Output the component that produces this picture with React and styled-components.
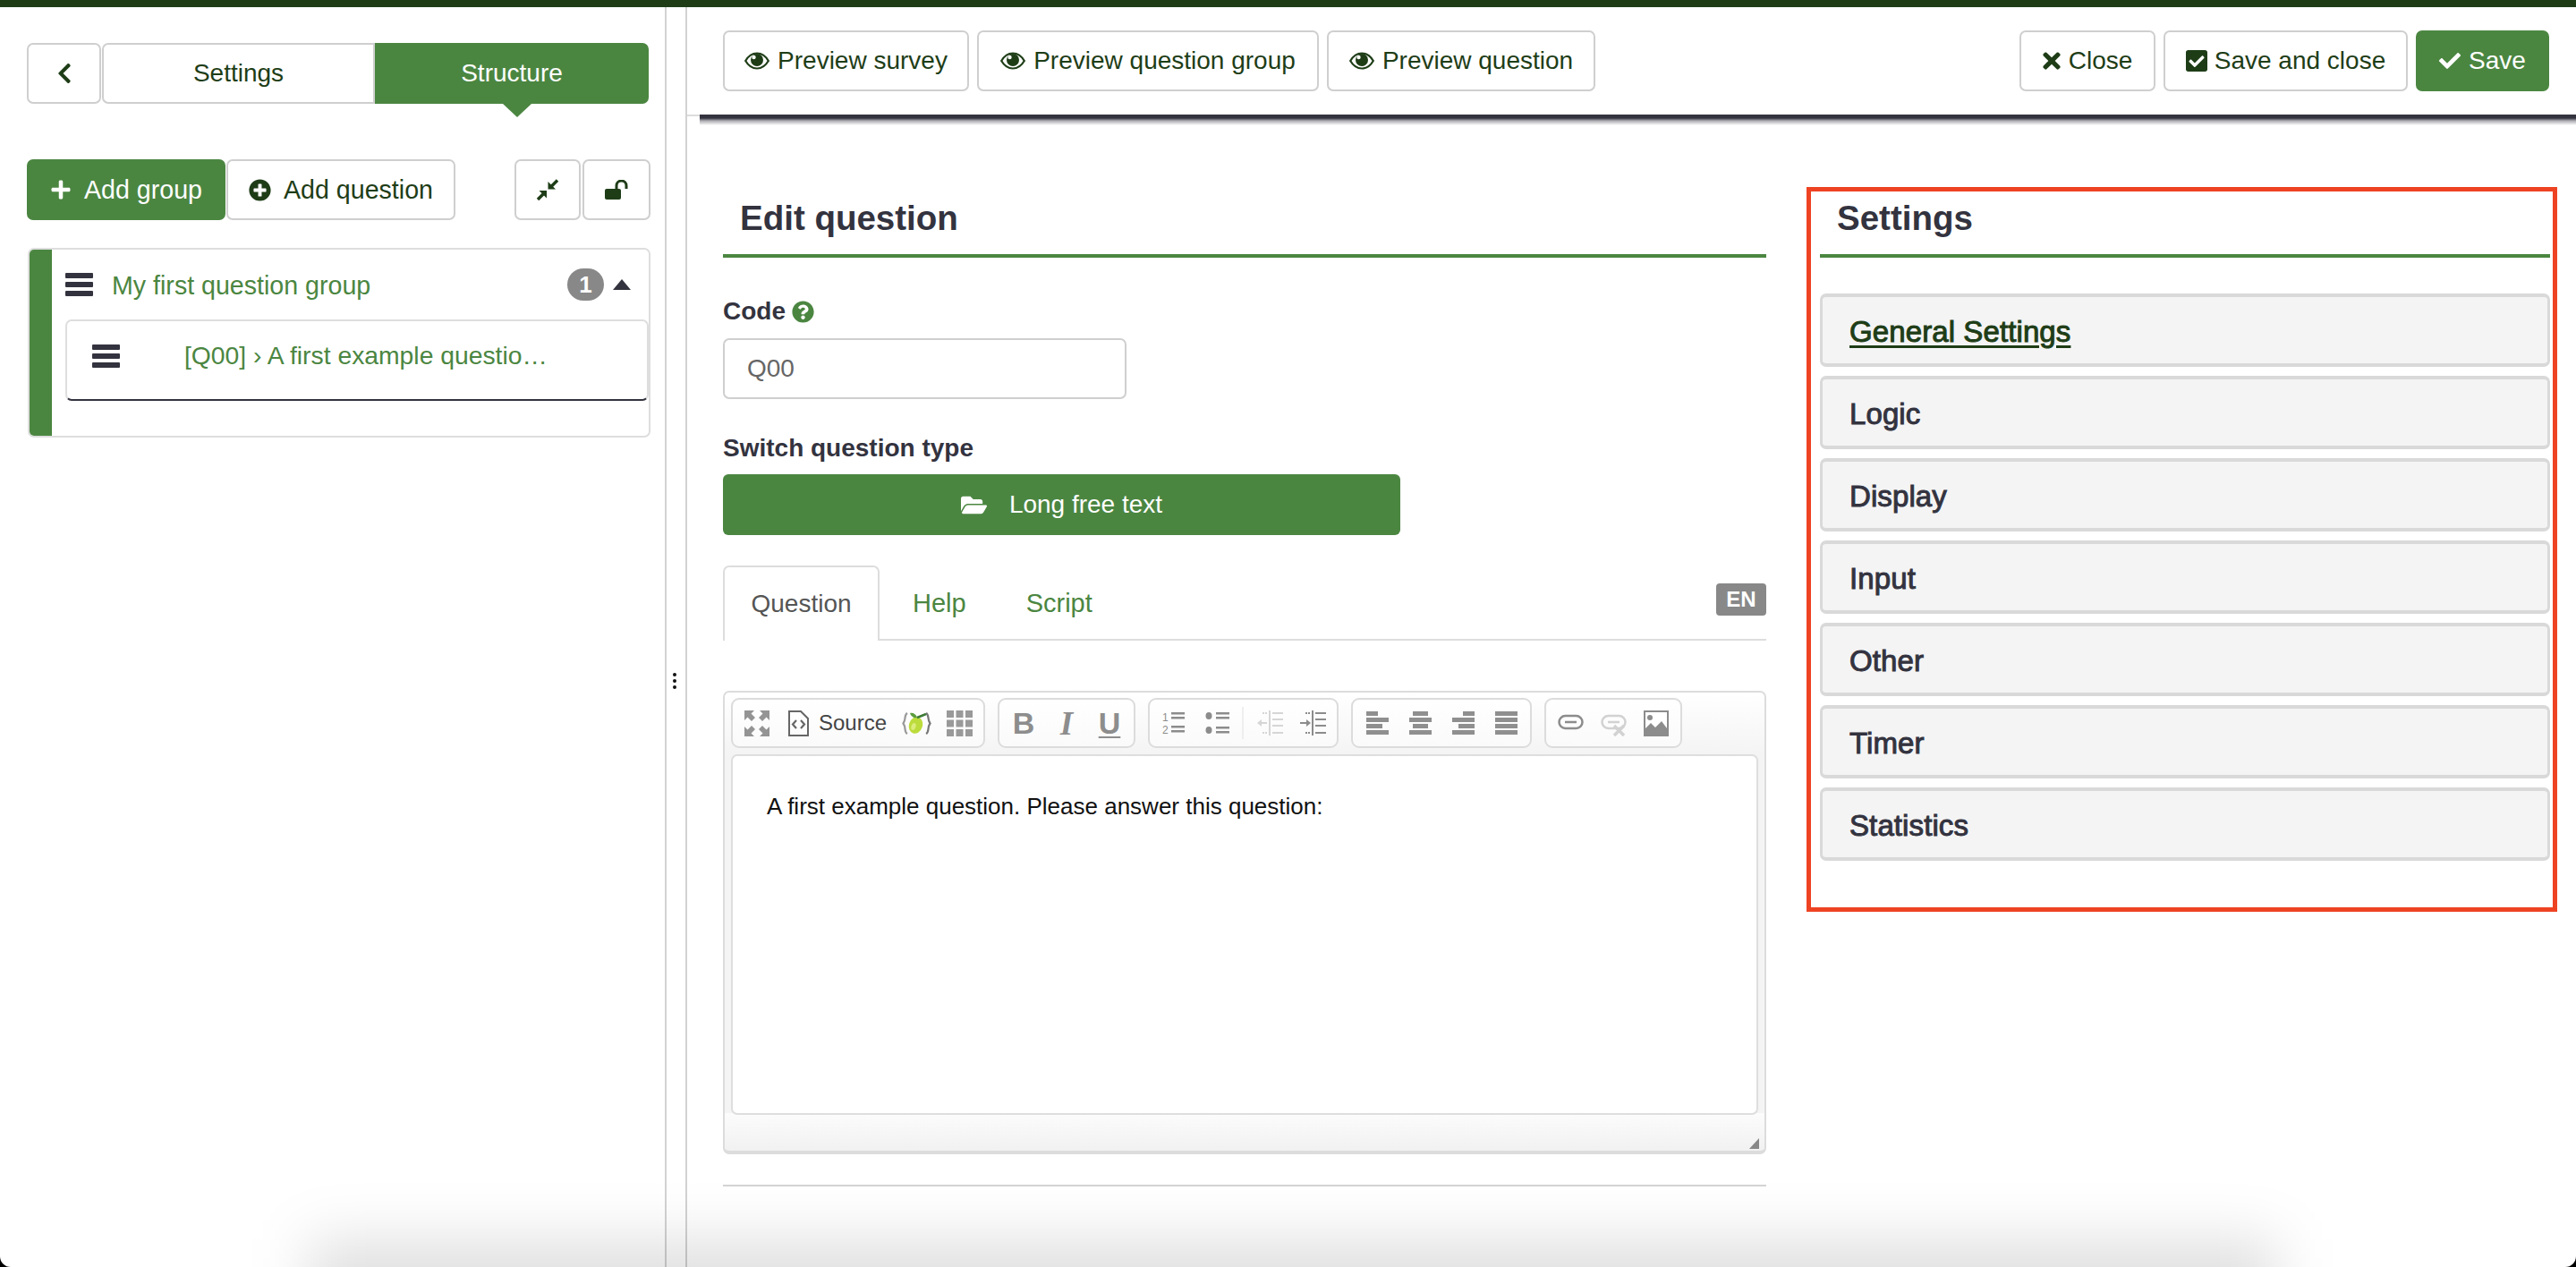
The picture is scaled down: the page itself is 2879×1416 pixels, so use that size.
import React from "react";
import styled, { createGlobalStyle } from "styled-components";
import {
  FaChevronLeft,
  FaPlus,
  FaPlusCircle,
  FaTimes,
  FaCheckSquare,
  FaCheck,
  FaFolderOpen,
  FaQuestionCircle,
} from "react-icons/fa";

const GREEN = "#4b8641";
const DARK = "#1e3d17";
const INK = "#33333f";

const GlobalStyle = createGlobalStyle`
  html, body {
    margin: 0;
    padding: 0;
    background: #000;
  }
  * { box-sizing: border-box; }
`;

const Page = styled.div`
  position: relative;
  width: 2879px;
  height: 1416px;
  overflow: hidden;
  display: flex;
  flex-direction: column;
  background: #fff;
  border-radius: 0 0 12px 12px;
  font-family: "Liberation Sans", Arial, sans-serif;
  font-size: 28px;
  color: ${INK};
`;

// window shadow that bleeds in from the bottom of the shot
const BottomGlow = styled.div`
  position: absolute;
  left: 345px;
  right: 335px;
  top: 1385px;
  height: 120px;
  background: rgba(0, 0, 0, 0.12);
  filter: blur(32px);
  pointer-events: none;
`;

const TopBar = styled.div`
  height: 8px;
  flex: none;
  background: ${DARK};
`;

const Body = styled.div`
  flex: 1;
  display: flex;
  min-height: 0;
`;

const Sidebar = styled.aside`
  width: 743px;
  flex: none;
  padding: 40px 16px 0 30px;
`;

const Splitter = styled.div`
  width: 25px;
  flex: none;
  border-left: 2px solid #d2d2d2;
  border-right: 2px solid #d2d2d2;
  display: flex;
  justify-content: center;
  align-items: flex-start;
  padding-top: 744px;
`;

const Dots = styled.div`
  display: flex;
  flex-direction: column;
  gap: 3px;
  margin-left: -3px;
  i {
    width: 4px;
    height: 4px;
    border-radius: 50%;
    background: #111;
  }
`;

const Btn = styled.button`
  height: 68px;
  flex: none;
  display: inline-flex;
  align-items: center;
  justify-content: center;
  gap: ${(p) => p.$gap || 9}px;
  width: ${(p) => p.$w}px;
  padding: 0;
  border: 2px solid ${(p) => (p.$primary ? GREEN : "#cfcfcf")};
  border-radius: ${(p) => p.$radius || "7px"};
  background: ${(p) => (p.$primary ? GREEN : "#fff")};
  color: ${(p) => (p.$primary ? "#fff" : DARK)};
  font: inherit;
  font-size: ${(p) => p.$size || 28}px;
  line-height: 1;
`;

const TabRow = styled.div`
  display: flex;
`;

const BackBtn = styled(Btn)`
  margin-right: 1px;
`;

const ActiveTab = styled(Btn)`
  position: relative;
  &::after {
    content: "";
    position: absolute;
    left: 50%;
    bottom: -17px;
    margin-left: -10px;
    border-style: solid;
    border-width: 15px 16px 0;
    border-color: ${GREEN} transparent transparent;
  }
`;

const ActionRow = styled.div`
  display: flex;
  margin-top: 62px;
  gap: 1px;
`;

const RowEnd = styled.div`
  margin-left: auto;
  display: flex;
  gap: 2px;
`;

const GroupCard = styled.div`
  margin-top: 31px;
  margin-left: 1px;
  height: 212px;
  display: flex;
  border: 2px solid #dedede;
  border-radius: 7px;
`;

const GroupBar = styled.div`
  width: 25px;
  flex: none;
  background: ${GREEN};
  border-radius: 5px 0 0 5px;
`;

const GroupBody = styled.div`
  flex: 1;
  min-width: 0;
`;

const GroupHeader = styled.div`
  height: 78px;
  display: flex;
  align-items: center;
  padding: 0 20px 0 15px;
  color: ${GREEN};
  font-size: 28.6px;
`;

const GroupTitle = styled.span`
  margin-left: 21px;
  position: relative;
  top: 1px;
`;

const Count = styled.span`
  margin-left: auto;
  width: 41px;
  height: 36px;
  border-radius: 18px;
  background: #888;
  color: #fff;
  font-size: 26px;
  font-weight: bold;
  display: flex;
  align-items: center;
  justify-content: center;
`;

const Caret = styled.span`
  margin-left: 10px;
  border-style: solid;
  border-width: 0 10px 12px;
  border-color: transparent transparent ${INK};
`;

const QuestionCard = styled.div`
  margin-left: 15px;
  height: 91px;
  display: flex;
  align-items: center;
  padding: 0 0 10px 28px;
  border: 2px solid #dedede;
  border-bottom-color: ${INK};
  border-radius: 7px;
  color: ${GREEN};
`;

const QuestionText = styled.span`
  margin-left: 72px;
  font-size: 28.3px;
  white-space: nowrap;
`;

const Main = styled.main`
  flex: 1;
  min-width: 0;
`;

const Toolbar = styled.div`
  position: relative;
  height: 122px;
  display: flex;
  gap: 9px;
  padding: 26px 30px 0 40px;
  border-bottom: 2px solid #dcdcdc;
  &::after {
    content: "";
    position: absolute;
    left: 14px;
    right: 0;
    top: 100%;
    height: 12px;
    background: linear-gradient(#33333f 0, #33333f 4px, rgba(51, 51, 63, 0.4) 7px, rgba(51, 51, 63, 0) 100%);
  }
`;

const ToolbarEnd = styled.div`
  margin-left: auto;
  display: flex;
  gap: 9px;
`;

const Columns = styled.div`
  display: grid;
  grid-template-columns: 1166px 839px;
  column-gap: 45px;
  align-items: start;
  padding: 79px 0 0 40px;
`;

const EditorColumn = styled.section`
  margin-top: 5px;
`;

const SectionTitle = styled.h2`
  margin: 0;
  height: 74px;
  padding: 0 0 4px 19px;
  border-bottom: 4px solid ${GREEN};
  font-size: 38.500px;
  line-height: 60px;
  font-weight: bold;
  color: ${INK};
`;

const FieldLabel = styled.div`
  margin-top: ${(p) => p.$top}px;
  height: 32px;
  display: flex;
  align-items: center;
  gap: 7px;
  font-size: 28px;
  font-weight: bold;
  color: ${INK};
  padding-top: ${(p) => p.$nudge || 0}px;
`;

const TextInput = styled.div`
  margin-top: 15px;
  width: 451px;
  height: 68px;
  display: flex;
  align-items: center;
  padding-left: 25px;
  border: 2px solid #cfcfcf;
  border-radius: 7px;
  color: #666;
`;

const TypeButton = styled.button`
  display: flex;
  align-items: center;
  justify-content: center;
  gap: 25px;
  margin-top: 13px;
  width: 757px;
  height: 68px;
  border: 0;
  border-radius: 6px;
  background: ${GREEN};
  color: #fff;
  font: inherit;
  font-size: 28px;
`;

const Tabs = styled.div`
  margin-top: 34px;
  height: 84px;
  display: flex;
  border-bottom: 2px solid #ddd;
`;

const ActiveSheet = styled.div`
  width: 175px;
  height: 84px;
  display: flex;
  align-items: center;
  justify-content: center;
  font-size: 28px;
  color: #555;
  background: #fff;
  border: 2px solid #ddd;
  border-bottom: 0;
  border-radius: 7px 7px 0 0;
`;

const Tab = styled.div`
  height: 82px;
  padding: 2px 30px 0 37px;
  display: flex;
  align-items: center;
  font-size: 29px;
  color: ${GREEN};
`;

const LangBadge = styled.span`
  margin: 20px 0 0 auto;
  width: 56px;
  height: 36px;
  border-radius: 4px;
  background: #888;
  color: #fff;
  font-size: 24px;
  font-weight: bold;
  display: flex;
  align-items: center;
  justify-content: center;
`;

const Editor = styled.div`
  position: relative;
  margin-top: 56px;
  height: 518px;
  padding: 0 7px;
  border: 2px solid #dcdcdc;
  border-bottom-width: 4px;
  border-radius: 7px;
  background: linear-gradient(
    #fff 0,
    #f4f4f4 69px,
    #f4f4f4 calc(100% - 42px),
    #fcfcfc calc(100% - 42px),
    #f1f1f1 100%
  );
`;

const EditorTools = styled.div`
  height: 69px;
  display: flex;
  gap: 14px;
  padding-top: 6px;
`;

const ToolGroup = styled.div`
  height: 56px;
  display: flex;
  align-items: center;
  padding: 0 3px;
  border: 2px solid #dcdcdc;
  border-radius: 9px;
  background: linear-gradient(#fff, #fafafa);
`;

const Tool = styled.span`
  width: ${(p) => p.$w || 48}px;
  height: 100%;
  flex: none;
  display: flex;
  align-items: center;
  justify-content: center;
  gap: 11px;
  padding-left: ${(p) => p.$pad || 0}px;
  color: #444;
  font-size: 24px;
`;

const ToolSep = styled.span`
  width: 2px;
  height: 36px;
  margin: 0 5px 0 4px;
  background: #efefef;
`;

const GlyphTool = styled(Tool)`
  font-size: 34px;
  font-weight: bold;
  color: #8d8d8d;
  text-decoration: ${(p) => (p.$under ? "underline" : "none")};
  text-decoration-thickness: 2px;
  text-underline-offset: 3px;
`;

const ItalicTool = styled(GlyphTool)`
  font-family: "Liberation Serif", serif;
  font-size: 37px;
  font-style: italic;
`;

const EditorContent = styled.div`
  height: 403px;
  padding: 36px 38px;
  border: 2px solid #dedede;
  border-radius: 7px;
  background: #fff;
  font-size: 26px;
  line-height: 40px;
  color: #111;
`;

const Grip = styled.span`
  position: absolute;
  right: 6px;
  bottom: 2px;
  width: 11px;
  height: 12px;
  background: #888;
  clip-path: polygon(100% 0, 100% 100%, 0 100%);
`;

const Rule = styled.hr`
  margin: 34px 0 0;
  height: 2px;
  border: 0;
  background: #d4d4d4;
`;

const SettingsBox = styled.section`
  height: 810px;
  padding-left: 10px;
  padding-right: 3px;
  border: 5px solid #ee4323;
`;

const Panels = styled.div`
  margin-top: 40px;
  display: flex;
  flex-direction: column;
  gap: 10px;
`;

const Panel = styled.div`
  height: 82px;
  display: flex;
  align-items: center;
  padding: 3px 0 0 30px;
  border: 3px solid #d9d9d9;
  border-top-width: 4px;
  border-bottom-width: 4px;
  border-radius: 7px;
  background: #f4f4f4;
  font-size: 33px;
  letter-spacing: 0.1px;
  -webkit-text-stroke: 1px currentColor;
  color: ${(p) => (p.$open ? DARK : INK)};
  text-decoration: ${(p) => (p.$open ? "underline" : "none")};
  text-underline-offset: 4px;
`;

const Eye = () => (
  <svg width="28" height="20" viewBox="0 0 28 20">
    <path d="M1.2 10C4.6 4.2 9 1.5 14 1.5S23.4 4.2 26.8 10C23.4 15.8 19 18.5 14 18.5S4.6 15.8 1.2 10Z" fill="none" stroke={DARK} strokeWidth="2.2" />
    <circle cx="14" cy="9" r="7" fill={DARK} />
    <circle cx="10.5" cy="6" r="2.2" fill="#fff" />
  </svg>
);

const Bars = () => (
  <svg width="31" height="26" viewBox="0 0 31 26" fill={INK}>
    <rect width="31" height="6" rx="1" />
    <rect y="10" width="31" height="6" rx="1" />
    <rect y="20" width="31" height="6" rx="1" />
  </svg>
);

const Compress = () => (
  <svg width="24" height="24" viewBox="0 0 24 24" fill={DARK}>
    <path d="M12.500 3V11.500H21Z" />
    <path d="M11 21.500V13H2.500Z" />
    <path d="M23 1.500L16 8.500M1 23L8 16" stroke={DARK} strokeWidth="3.500" />
  </svg>
);

const Unlock = () => (
  <svg width="26" height="22" viewBox="0 0 26 22" fill="none">
    <rect y="10" width="18" height="12" rx="2" fill={DARK} />
    <path d="M13 11V6.500A5.500 5.500 0 0 1 24 6.500V10" stroke={DARK} strokeWidth="3" />
  </svg>
);

const Expand = () => (
  <svg width="28" height="29" viewBox="0 0 28 29" fill="#949494">
    <path d="M0 0H11L7.5 3.5 12 8 8 12 3.5 7.5 0 11Z" />
    <path d="M28 0H17L20.5 3.5 16 8 20 12 24.500 7.500 28 11Z" />
    <path d="M0 29H11L7.500 25.500 12 21 8 17 3.500 21.500 0 18Z" />
    <path d="M28 29H17L20.500 25.500 16 21 20 17 24.500 21.500 28 18Z" />
  </svg>
);

const SourceDoc = () => (
  <svg width="23" height="29" viewBox="0 0 23 29" fill="none" stroke="#666" strokeWidth="2">
    <path d="M1 1H14L22 9V28H1Z" />
    <path d="M9 11L5 15.500 9 20M14 11L18 15.500 14 20" strokeWidth="2.200" />
  </svg>
);

const Lime = () => (
  <svg width="33" height="29" viewBox="0 0 33 29" fill="none">
    <path d="M6 3C2 5 5 10 1.500 14.500 5 19 2 24 6 26" stroke="#9a9a9a" strokeWidth="2.200" />
    <path d="M27 3C31 5 28 10 31.500 14.500 28 19 31 24 27 26" stroke="#777" strokeWidth="2.200" />
    <ellipse cx="15.500" cy="16.500" rx="7.500" ry="9.500" fill="#bcdc3c" transform="rotate(18 15.500 16.500)" />
    <ellipse cx="13" cy="18" rx="2.500" ry="4" fill="#dcec7c" transform="rotate(18 13 18)" />
    <path d="M17 8L27 4" stroke="#3d7a35" strokeWidth="2.500" />
    <path d="M9 3C12 2 16 4 17 8 14 9 10 7 9 3Z" fill="#5c9c3e" />
  </svg>
);

const TableGrid = () => (
  <svg width="29" height="29" viewBox="0 0 29 29" fill="#999">
    {[0, 10.500, 21].map((y) =>
      [0, 10.500, 21].map((x) => <rect key={`${x}-${y}`} x={x} y={y} width="8" height="8" />)
    )}
  </svg>
);

const NumberList = () => (
  <svg width="26" height="26" viewBox="0 0 26 26" fill="#8c8c8c">
    <text x="0" y="11" fontSize="12" fontFamily="Liberation Sans">1</text>
    <text x="0" y="25" fontSize="12" fontFamily="Liberation Sans">2</text>
    <rect x="10" y="1" width="15" height="2.500" />
    <rect x="10" y="6" width="15" height="2.500" />
    <rect x="10" y="16" width="15" height="2.500" />
    <rect x="10" y="21" width="15" height="2.500" />
  </svg>
);

const BulletList = () => (
  <svg width="27" height="26" viewBox="0 0 27 26" fill="#8c8c8c">
    <ellipse cx="4" cy="5" rx="3.500" ry="4" />
    <ellipse cx="4" cy="21" rx="3.500" ry="4" />
    <rect x="12" y="1" width="15" height="2.500" />
    <rect x="12" y="6" width="15" height="2.500" />
    <rect x="12" y="17" width="15" height="2.500" />
    <rect x="12" y="22" width="15" height="2.500" />
  </svg>
);

const Indent = ({ out }) => {
  const c = out ? "#d6d6d6" : "#8c8c8c";
  return (
    <svg width="29" height="28" viewBox="0 0 29 28" fill={c}>
      <rect x="13" width="2" height="28" />
      <rect x="17" y="2" width="12" height="2" />
      <rect x="17" y="9" width="12" height="2" />
      <rect x="17" y="16" width="12" height="2" />
      <rect x="17" y="24" width="12" height="2" />
      <rect x="6" y="2" width="2" height="2" />
      <rect x="9" y="2" width="2" height="2" />
      <rect x="6" y="24" width="2" height="2" />
      <rect x="9" y="24" width="2" height="2" />
      {out ? (
        <path d="M0 14L5 10V13H11V15H5V18Z" />
      ) : (
        <path d="M12 14L7 10V13H0V15H7V18Z" />
      )}
    </svg>
  );
};

const Align = ({ rows }) => (
  <svg width="25" height="27" viewBox="0 0 25 27" fill="#8f8f8f">
    {rows.map(([x, w], i) => (
      <rect key={i} x={x} y={i * 7} width={w} height="5" />
    ))}
  </svg>
);

const LinkIcon = ({ off }) => {
  const c = off ? "#d2d2d2" : "#8c8c8c";
  return (
    <svg width="29" height="29" viewBox="0 0 29 29" fill="none" stroke={c} strokeWidth="2.500">
      <rect x="1.500" y="6" width="26" height="14" rx="7" />
      <path d="M8 13H21" />
      {off && <path d="M15 17L26 28M26 17L15 28" strokeWidth="3.500" />}
    </svg>
  );
};

const ImageIcon = () => (
  <svg width="28" height="29" viewBox="0 0 28 29">
    <rect x="1" y="1" width="26" height="27" fill="#fff" stroke="#8c8c8c" strokeWidth="2" />
    <circle cx="7" cy="8" r="3" fill="#8c8c8c" />
    <path d="M2 28V20L8 14 13 19 20 12 26 20V28Z" fill="#8c8c8c" />
  </svg>
);

// svg box narrowed to the glyph so the button keeps the reference spacing
const CloseGlyph = styled(FaTimes)`
  width: 20px;
  height: 28px;
`;

const SquareGlyph = styled(FaCheckSquare)`
  width: 24px;
  height: 28px;
`;

const panelNames = ["Logic", "Display", "Input", "Other", "Timer", "Statistics"];

const App = () => (
  <>
    <GlobalStyle />
    <Page>
      <TopBar />
      <Body>
        <Sidebar>
          <TabRow>
            <BackBtn $w={83}>
              <FaChevronLeft size={26} />
            </BackBtn>
            <Btn $w={305} $radius="7px 0 0 7px">
              Settings
            </Btn>
            <ActiveTab $w={306} $primary $radius="0 7px 7px 0">
              Structure
            </ActiveTab>
          </TabRow>
          <ActionRow>
            <Btn $w={222} $primary $gap={14} $size={28.6}>
              <FaPlus size={24} />
              Add group
            </Btn>
            <Btn $w={256} $gap={14} $size={28.6}>
              <FaPlusCircle size={25} />
              Add question
            </Btn>
            <RowEnd>
              <Btn $w={74}>
                <Compress />
              </Btn>
              <Btn $w={76}>
                <Unlock />
              </Btn>
            </RowEnd>
          </ActionRow>
          <GroupCard>
            <GroupBar />
            <GroupBody>
              <GroupHeader>
                <Bars />
                <GroupTitle>My first question group</GroupTitle>
                <Count>1</Count>
                <Caret />
              </GroupHeader>
              <QuestionCard>
                <Bars />
                <QuestionText>[Q00] › A first example questio…</QuestionText>
              </QuestionCard>
            </GroupBody>
          </GroupCard>
        </Sidebar>
        <Splitter>
          <Dots>
            <i />
            <i />
            <i />
          </Dots>
        </Splitter>
        <Main>
          <Toolbar>
            <Btn $w={275}>
              <Eye />
              Preview survey
            </Btn>
            <Btn $w={382}>
              <Eye />
              Preview question group
            </Btn>
            <Btn $w={300}>
              <Eye />
              Preview question
            </Btn>
            <ToolbarEnd>
              <Btn $w={152}>
                <CloseGlyph />
                Close
              </Btn>
              <Btn $w={273} $gap={8}>
                <SquareGlyph />
                Save and close
              </Btn>
              <Btn $w={149} $primary>
                <FaCheck size={24} />
                Save
              </Btn>
            </ToolbarEnd>
          </Toolbar>
          <Columns>
            <EditorColumn>
              <SectionTitle>Edit question</SectionTitle>
              <FieldLabel $top={43} $nudge={2}>
                Code
                <FaQuestionCircle size={25} color={GREEN} />
              </FieldLabel>
              <TextInput>Q00</TextInput>
              <FieldLabel $top={39}>Switch question type</FieldLabel>
              <TypeButton>
                <FaFolderOpen size={29} />
                Long free text
              </TypeButton>
              <Tabs>
                <ActiveSheet>Question</ActiveSheet>
                <Tab>Help</Tab>
                <Tab>Script</Tab>
                <LangBadge>EN</LangBadge>
              </Tabs>
              <Editor>
                <EditorTools>
                  <ToolGroup>
                    <Tool>
                      <Expand />
                    </Tool>
                    <Tool $w={130} $pad={2}>
                      <SourceDoc />
                      Source
                    </Tool>
                    <Tool>
                      <Lime />
                    </Tool>
                    <Tool>
                      <TableGrid />
                    </Tool>
                  </ToolGroup>
                  <ToolGroup>
                    <GlyphTool>B</GlyphTool>
                    <ItalicTool>I</ItalicTool>
                    <GlyphTool $under>U</GlyphTool>
                  </ToolGroup>
                  <ToolGroup>
                    <Tool>
                      <NumberList />
                    </Tool>
                    <Tool>
                      <BulletList />
                    </Tool>
                    <ToolSep />
                    <Tool>
                      <Indent out />
                    </Tool>
                    <Tool>
                      <Indent />
                    </Tool>
                  </ToolGroup>
                  <ToolGroup>
                    <Tool>
                      <Align rows={[[0, 13], [0, 25], [0, 18], [0, 25]]} />
                    </Tool>
                    <Tool>
                      <Align rows={[[4, 17], [0, 25], [4, 17], [0, 25]]} />
                    </Tool>
                    <Tool>
                      <Align rows={[[12, 13], [0, 25], [7, 18], [0, 25]]} />
                    </Tool>
                    <Tool>
                      <Align rows={[[0, 25], [0, 25], [0, 25], [0, 25]]} />
                    </Tool>
                  </ToolGroup>
                  <ToolGroup>
                    <Tool>
                      <LinkIcon />
                    </Tool>
                    <Tool>
                      <LinkIcon off />
                    </Tool>
                    <Tool>
                      <ImageIcon />
                    </Tool>
                  </ToolGroup>
                </EditorTools>
                <EditorContent>A first example question. Please answer this question:</EditorContent>
                <Grip />
              </Editor>
              <Rule />
            </EditorColumn>
            <SettingsBox>
              <SectionTitle>Settings</SectionTitle>
              <Panels>
                <Panel $open>General Settings</Panel>
                {panelNames.map((name) => (
                  <Panel key={name}>{name}</Panel>
                ))}
              </Panels>
            </SettingsBox>
          </Columns>
        </Main>
      </Body>
      <BottomGlow />
    </Page>
  </>
);

export default App;
